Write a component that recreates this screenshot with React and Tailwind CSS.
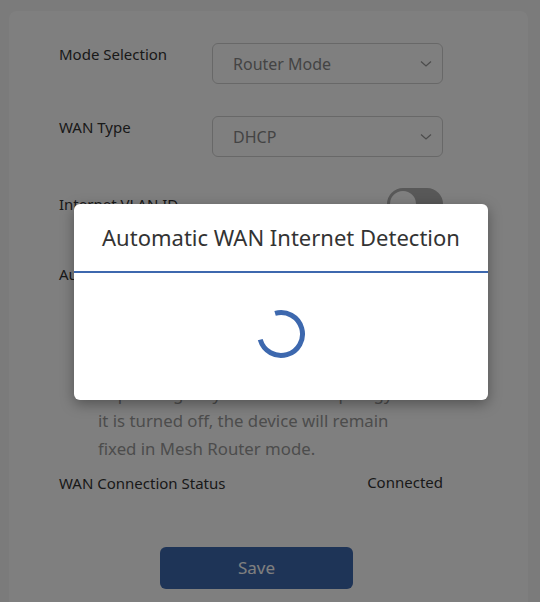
import React from "react";

function Select({ value }) {
  return (
    <div className="flex h-[41px] w-[231px] items-center justify-between rounded-md border border-[#d0d0d0] bg-white pl-[20px] pr-[10px]">
      <span className="text-[16px] text-[#888]">{value}</span>
      <svg width="12" height="8" viewBox="0 0 12 8" fill="none">
        <path d="M1 1.5 L6 6 L11 1.5" stroke="#999" strokeWidth="1.3" />
      </svg>
    </div>
  );
}

function Toggle() {
  return (
    <div className="relative h-[32px] w-[56px] rounded-full bg-[#b0b0b0]">
      <div className="absolute left-[3px] top-[3px] h-[26px] w-[26px] rounded-full bg-white" />
    </div>
  );
}

export default function App() {
  const desc = [
    "When enabled, the device will switch",
    "between Mesh Router mode and Mesh",
    "Access Point mode automatically,",
    "depending on your network topology. If",
    "it is turned off, the device will remain",
    "fixed in Mesh Router mode."
  ];
  return (
    <div className="relative h-[602px] w-[540px] overflow-hidden bg-[#f6f6f6] font-['Noto_Sans',sans-serif]">
      <div className="ml-[9px] mr-[12px] mt-[11px] h-[640px] rounded-lg bg-white pl-[50px] pr-[85px] pt-[32px]">
        <div className="flex items-start justify-between">
          <span className="text-[15px] text-[#333]">Mode Selection</span>
          <Select value="Router Mode" />
        </div>
        <div className="mt-[32px] flex items-start justify-between">
          <span className="text-[15px] text-[#333]">WAN Type</span>
          <Select value="DHCP" />
        </div>
        <div className="mt-[31px] flex items-center justify-between">
          <span className="text-[15px] text-[#333]">Internet VLAN ID</span>
          <Toggle />
        </div>
        <div className="mt-[38px] flex items-center justify-between">
          <span className="text-[15px] text-[#333]">Auto Mode Switching</span>
          <Toggle />
        </div>
        <div className="mt-[7px] whitespace-nowrap pl-[39px] text-[16.8px] leading-[27.5px] text-[#999]">
          {desc.map((l) => (
            <div key={l}>{l}</div>
          ))}
        </div>
        <div className="mt-[9px] flex items-start justify-between">
          <span className="pt-[1px] text-[15px] text-[#333]">WAN Connection Status</span>
          <span className="text-[15px] text-[#333]">Connected</span>
        </div>
        <div className="mt-[52px] pl-[101px]">
          <button className="h-[42px] w-[193px] rounded-md bg-[#3d68ae] text-[17px] text-white">
            Save
          </button>
        </div>
      </div>

      <div className="absolute inset-0 bg-black/50 pl-[74px] pt-[204px]">
        <div className="h-[196px] w-[414px] overflow-hidden rounded-md bg-white shadow-[0_4px_14px_rgba(0,0,0,0.35)]">
          <div className="flex h-[69px] items-center justify-center border-b-2 border-[#3d68ae]">
            <span className="text-[22px] text-[#333]">Automatic WAN Internet Detection</span>
          </div>
          <div className="flex justify-center pt-[36px]">
            <svg width="50" height="50" viewBox="0 0 50 50">
              <circle
                cx="25"
                cy="25"
                r="21.5"
                fill="none"
                stroke="#3d68ae"
                strokeWidth="5"
                strokeDasharray="101 34"
                transform="rotate(254 25 25)"
              />
            </svg>
          </div>
        </div>
      </div>
    </div>
  );
}
